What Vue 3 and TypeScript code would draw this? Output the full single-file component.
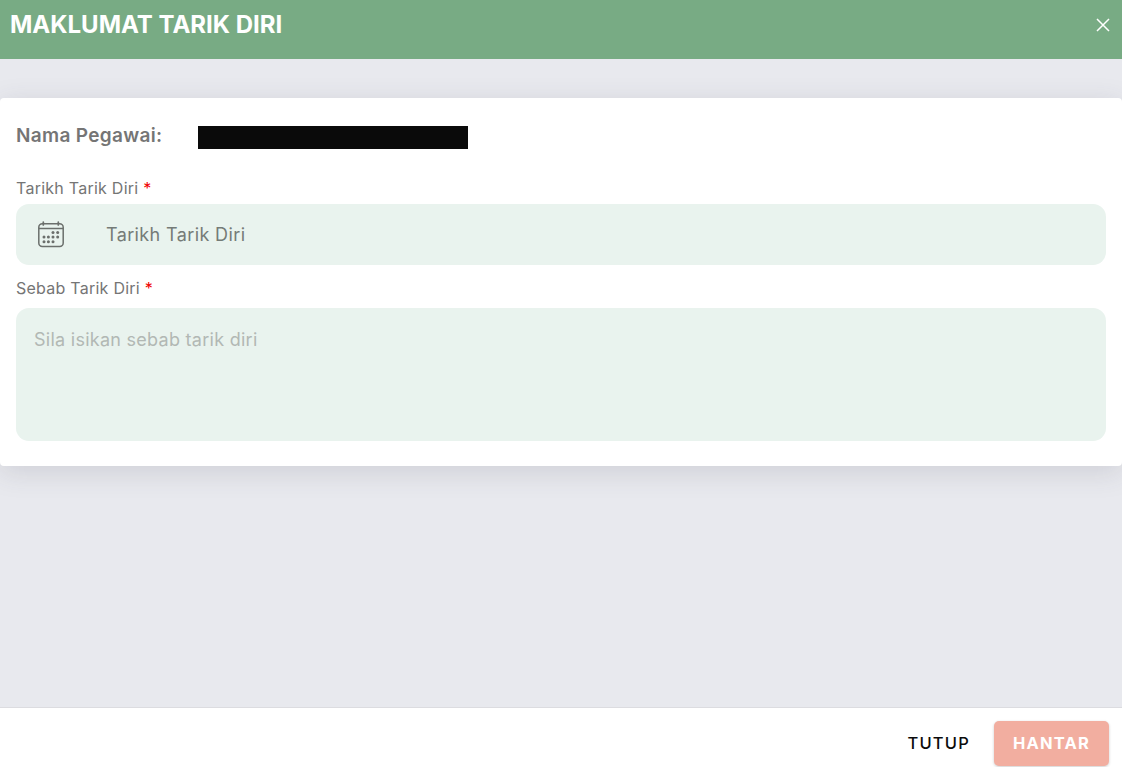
<script setup lang="ts">
const dots: [number, number][] = [
  [16, 11.5], [20.7, 11.5],
  [7, 16], [11.4, 16], [16, 16], [20.7, 16],
  [7, 20.7], [11.4, 20.7], [16, 20.7],
];
</script>

<template>
  <div class="dialog">
    <header class="bar">
      <h1 class="title">MAKLUMAT TARIK DIRI</h1>
      <button class="close" type="button" aria-label="Tutup">
        <svg width="14" height="14" viewBox="0 0 14 14">
          <path d="M1 1 L13 13 M13 1 L1 13" stroke="#fff" stroke-width="1.5" fill="none" />
        </svg>
      </button>
    </header>

    <main class="content">
      <section class="card">
        <div class="staff">
          <span class="staff-label">Nama Pegawai:</span>
          <span class="redacted"></span>
        </div>

        <label class="label first">Tarikh Tarik Diri <span class="req">*</span></label>
        <div class="date-field">
          <svg class="cal" width="28" height="28" viewBox="0 0 28 28" fill="none">
            <rect x="1.8" y="2.8" width="24.4" height="22.8" rx="3.5" stroke="#6b6f6c" stroke-width="1.5" />
            <path d="M1.8 7.5 H26.2" stroke="#6b6f6c" stroke-width="1.5" />
            <path d="M6.3 1 V4 M21.3 1 V4" stroke="#6b6f6c" stroke-width="1.7" stroke-linecap="round" />
            <circle v-for="(d, i) in dots" :key="i" :cx="d[0]" :cy="d[1]" r="1.5" fill="#6b6f6c" />
          </svg>
          <span class="date-text">Tarikh Tarik Diri</span>
        </div>

        <label class="label second">Sebab Tarik Diri <span class="req">*</span></label>
        <textarea class="reason" placeholder="Sila isikan sebab tarik diri"></textarea>
      </section>
    </main>

    <footer class="actions">
      <button class="btn-close" type="button">TUTUP</button>
      <button class="btn-send" type="button" disabled>HANTAR</button>
    </footer>
  </div>
</template>

<style>
html, body { margin: 0; padding: 0; }
</style>

<style scoped>
.dialog {
  width: 1122px;
  height: 767px;
  display: flex;
  flex-direction: column;
  overflow: hidden;
  font-family: Inter, "Liberation Sans", sans-serif;
  background: #e8e9ee;
}
.bar {
  height: 59px;
  flex: none;
  box-sizing: border-box;
  background: #78ab84;
  display: flex;
  align-items: center;
  justify-content: space-between;
  padding: 0 12px 10px 10px;
}
.title {
  margin: 0;
  color: #fff;
  font-size: 24px;
  font-weight: 700;
  line-height: 34px;
}
.close {
  width: 14px;
  height: 14px;
  padding: 0;
  border: 0;
  background: none;
  display: flex;
}
.content {
  flex: 1;
  padding-top: 39px;
}
.card {
  height: 368px;
  box-sizing: border-box;
  background: #fff;
  border-radius: 4px;
  padding: 28px 16px 0;
  box-shadow: 0 6px 28px rgba(60, 60, 80, 0.15);
  display: flex;
  flex-direction: column;
}
.staff {
  display: flex;
  align-items: flex-start;
  height: 23px;
}
.staff-label {
  width: 182px;
  font-size: 19px;
  line-height: 20px;
  font-weight: 600;
  letter-spacing: 0.32px;
  color: #757575;
}
.redacted {
  width: 270px;
  height: 23px;
  background: #0a0a0a;
}
.label {
  font-size: 16px;
  line-height: 20px;
  letter-spacing: 0.25px;
  color: #757575;
}
.label.first { margin-top: 29px; }
.label.second { margin-top: 13px; }
.req { color: #f00000; }
.date-field {
  margin-top: 6px;
  height: 61px;
  flex: none;
  border-radius: 13px;
  background: #e9f3ee;
  display: flex;
  align-items: center;
  padding-left: 21px;
}
.cal { flex: none; }
.date-text {
  margin-left: 41px;
  padding-bottom: 1px;
  font-size: 18px;
  letter-spacing: 0.38px;
  color: #757b77;
}
.reason {
  margin-top: 10px;
  height: 133px;
  flex: none;
  box-sizing: border-box;
  border: 0;
  outline: 0;
  resize: none;
  border-radius: 13px;
  background: #e9f3ee;
  padding: 21px 18px;
  font: 18px/22px Inter, "Liberation Sans", sans-serif;
  letter-spacing: 0.27px;
  color: #757b77;
}
.reason::placeholder { color: #b2b8b4; opacity: 1; }
.actions {
  height: 60px;
  flex: none;
  box-sizing: border-box;
  background: #fff;
  border-top: 1px solid #dcdce0;
  display: flex;
  justify-content: flex-end;
  align-items: flex-start;
  padding: 13px 13px 0 0;
  gap: 24px;
}
.actions button {
  font-family: Inter, "Liberation Sans", sans-serif;
  font-size: 16.5px;
  letter-spacing: 1.2px;
  border: 0;
  height: 45px;
  padding: 0 0 2px;
}
.btn-close {
  background: none;
  color: #0b0b0b;
  font-weight: 500;
}
.btn-send {
  width: 115px;
  background: #f2aea0;
  color: #fff;
  font-weight: 700;
  border-radius: 5px;
  box-shadow: 0 1px 3px rgba(0, 0, 0, 0.2);
}
</style>
